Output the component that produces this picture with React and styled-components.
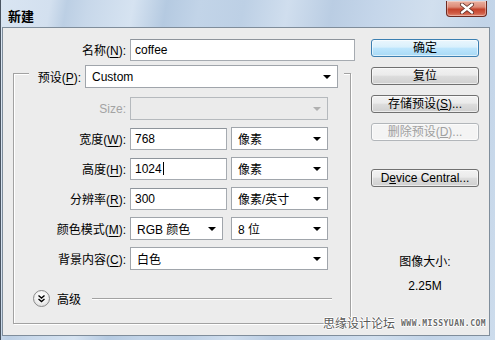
import React from 'react';
import styled, { createGlobalStyle } from 'styled-components';

const GlobalStyle = createGlobalStyle`
    html, body { margin: 0; padding: 0; background: #ececec; }
    body { font-family: "Liberation Sans", "Noto Sans CJK SC", sans-serif; font-size: 12px; }
`

const Window = styled.div`
    position: relative;
    width: 495px; height: 340px;
    box-sizing: border-box;
    display: flex; flex-direction: column;
    border-left: 1px solid #4a5562;
    background: linear-gradient(100deg,
        #d9e5f2 0%, #d3e0ef 9%, #bccfe4 12%, #c8d8ea 16%, #d6e3f1 24%,
        #b5cae1 30%, #c2d4e8 36%, #bdd0e5 44%, #d0deee 52%, #bacde3 60%,
        #c5d6ea 68%, #d1dfee 78%, #c2d4e8 88%, #cddcec 100%);
`
const TitleBar = styled.div`
    height: 27px;
    flex: none;
    display: flex; align-items: flex-start;
    padding: 0 8px 0 7px;
`
const Title = styled.div`
    font-family: "Noto Sans CJK SC", sans-serif;
    font-weight: bold;
    font-size: 13px;
    line-height: 13px;
    margin-top: 9px;
    color: #000;
`
const CloseButton = styled.div`
    margin-left: auto;
    margin-top: 1px;
    width: 41px; height: 16px;
    box-sizing: border-box;
    border: 1px solid #6e2a20;
    border-top: none;
    border-radius: 0 0 4px 4px;
    background: linear-gradient(#eab1a2 0%, #dd8a77 40%, #c4432c 55%, #cf5a43 80%, #e08a74 100%);
    box-shadow: inset 0 0 0 1px rgba(255,255,255,0.35);
    display: flex; align-items: center; justify-content: center;
`
const Client = styled.div`
    flex: 1;
    display: flex;
    margin: 0 5px 4px 1px;
    background: #ececec;
    border: 1px solid #7f8d9b;
`
const LeftPane = styled.div`
    padding: 10px 0 0 10px;
    width: 338px;
    flex: none;
`
const Row = styled.div`
    display: flex; align-items: center;
    gap: 4px;
    height: 23px;
    margin-top: ${p => p.$top || 0}px;
`
const Label = styled.div`
    width: ${p => p.$w}px;
    flex: none;
    text-align: right;
    white-space: nowrap;
    color: ${p => p.$disabled ? '#a3a3a3' : '#000'};
    & u { text-decoration: underline; text-underline-offset: 2px; }
`
const TextInput = styled.div`
    width: ${p => p.$w}px;
    height: 22px;
    box-sizing: border-box;
    flex: none;
    background: #fff;
    border: 1px solid #a6abb1;
    border-top-color: #8e949b;
    padding: 0 4px;
    display: flex; align-items: center;
    color: #000;
`
const Caret = styled.span`
    display: inline-block;
    width: 1px; height: 13px;
    background: #000;
    margin-left: 1px;
`
const Select = styled.div`
    width: ${p => p.$w}px;
    height: 23px;
    box-sizing: border-box;
    flex: none;
    background: ${p => p.$disabled ? '#ebebeb' : '#fff'};
    border: 1px solid ${p => p.$disabled ? '#b5b9bd' : '#a0a5ab'};
    padding: 0 6px 0 6px;
    display: flex; align-items: center; justify-content: space-between;
    color: #000;
`
const Arrow = styled.span`
    width: 0; height: 0;
    border-left: 4px solid transparent;
    border-right: 4px solid transparent;
    border-top: 4px solid ${p => p.$disabled ? '#b0b0b0' : '#000'};
    margin-top: 1px;
`
const Group = styled.div`
    margin-top: 12px;
    width: 338px; height: 251px;
    box-sizing: border-box;
    border: 1px solid #a2a2a2;
    box-shadow: inset 1px 1px 0 #fff, 1px 1px 0 #fff;
    padding-bottom: 16px;
`
const PresetRow = styled(Row)`
    width: 315px;
    box-sizing: border-box;
    margin: -9px 0 0 15px;
    padding: 0 6px;
    background: #ececec;
`
const Advanced = styled.div`
    display: flex; align-items: center;
    height: 17px;
    margin: 20px 18px 0 19px;
    gap: 7px;
`
const ExpandIcon = styled.div`
    width: 17px; height: 17px;
    box-sizing: border-box;
    border-radius: 50%;
    border: 1px solid #8a8a8a;
    background: radial-gradient(circle at 50% 35%, #ffffff 0%, #f1f1f1 50%, #d4d4d4 100%);
    display: flex; align-items: center; justify-content: center;
`
const Divider = styled.div`
    flex: 1;
    height: 1px;
    background: #a2a2a2;
    box-shadow: 0 1px 0 #fff;
    margin-left: 4px;
`
const RightPane = styled.div`
    margin-left: 20px;
    padding-top: 11px;
    width: 108px;
    display: flex; flex-direction: column; align-items: center;
`
const Button = styled.div`
    width: 108px; height: 18px;
    box-sizing: border-box;
    margin-top: ${p => p.$top ?? 10}px;
    border: 1px solid ${p => p.$primary ? '#3c7fb1' : p.$disabled ? '#b2b6ba' : '#707070'};
    border-radius: 3px;
    background: ${p => p.$primary
        ? 'linear-gradient(#eaf6fd 0%, #d9f0fc 45%, #bee6fd 50%, #a7d9f5 100%)'
        : p.$disabled ? '#f4f4f4'
        : 'linear-gradient(#f2f2f2 0%, #ebebeb 45%, #dddddd 50%, #cfcfcf 100%)'};
    box-shadow: inset 0 0 0 1px rgba(255,255,255,0.6);
    display: flex; align-items: center; justify-content: center;
    color: ${p => p.$disabled ? '#a0a0a0' : '#000'};
    line-height: 16px;
    white-space: nowrap;
`
const Info = styled.div`
    margin-top: ${p => p.$top}px;
    line-height: 14px;
    color: #000;
`
const Watermark = styled.div`
    position: absolute;
    left: 322px; top: 316px;
    display: flex; align-items: center; gap: 6px;
    color: #5a5a5a;
    text-shadow: 1px 0 0 #fff, -1px 0 0 #fff, 0 1px 0 #fff, 0 -1px 0 #fff;
`
const WmCn = styled.span`
    font-family: "Noto Sans CJK SC", sans-serif;
    font-size: 12px;
    line-height: 14px;
`
const WmUrl = styled.span`
    font-family: "DejaVu Sans Mono", monospace;
    font-weight: bold;
    font-size: 8px;
    letter-spacing: 0.5px;
    color: #6a6a6a;
`

const Key = ({ label, k, after = ':' }) => <>{label}(<u>{k}</u>){after}</>;

const App = () => {
    return <Window>
        <GlobalStyle />
        <TitleBar>
            <Title>新建</Title>
            <CloseButton>
                <svg width="16" height="11" viewBox="0 0 16 11">
                    <path d="M3 1.5 L13 9.5 M13 1.5 L3 9.5" stroke="#5a2a22" strokeWidth="4" strokeLinecap="round" />
                    <path d="M3 1.5 L13 9.5 M13 1.5 L3 9.5" stroke="#fff" strokeWidth="2.4" strokeLinecap="round" />
                </svg>
            </CloseButton>
        </TitleBar>
        <Client>
            <LeftPane>
                <Row>
                    <Label $w={113}><Key label="名称" k="N" /></Label>
                    <TextInput $w={225}>coffee</TextInput>
                </Row>
                <Group>
                    <PresetRow>
                        <Label $w={46}><Key label="预设" k="P" /></Label>
                        <Select $w={253}>Custom<Arrow /></Select>
                    </PresetRow>
                    <Row $top={9}>
                        <Label $w={112} $disabled>Size:</Label>
                        <Select $w={198} $disabled><span /><Arrow $disabled /></Select>
                    </Row>
                    <Row $top={7}>
                        <Label $w={112}><Key label="宽度" k="W" /></Label>
                        <TextInput $w={97}>768</TextInput>
                        <Select $w={97}>像素<Arrow /></Select>
                    </Row>
                    <Row $top={7}>
                        <Label $w={112}><Key label="高度" k="H" /></Label>
                        <TextInput $w={97}>1024<Caret /></TextInput>
                        <Select $w={97}>像素<Arrow /></Select>
                    </Row>
                    <Row $top={7}>
                        <Label $w={112}><Key label="分辨率" k="R" /></Label>
                        <TextInput $w={97}>300</TextInput>
                        <Select $w={97}>像素/英寸<Arrow /></Select>
                    </Row>
                    <Row $top={7}>
                        <Label $w={112}><Key label="颜色模式" k="M" /></Label>
                        <Select $w={93}>RGB 颜色<Arrow /></Select>
                        <Select $w={97} style={{ marginLeft: 4 }}>8 位<Arrow /></Select>
                    </Row>
                    <Row $top={7}>
                        <Label $w={112}><Key label="背景内容" k="C" /></Label>
                        <Select $w={198}>白色<Arrow /></Select>
                    </Row>
                    <Advanced>
                        <ExpandIcon>
                            <svg width="9" height="9" viewBox="0 0 9 9">
                                <path d="M1.5 1.5 L4.5 4 L7.5 1.5 M1.5 5 L4.5 7.5 L7.5 5" fill="none" stroke="#000" strokeWidth="1.4" />
                            </svg>
                        </ExpandIcon>
                        <span>高级</span>
                        <Divider />
                    </Advanced>
                </Group>
            </LeftPane>
            <RightPane>
                <Button $primary $top={0}>确定</Button>
                <Button>复位</Button>
                <Button>存储预设(<u>S</u>)...</Button>
                <Button $disabled>删除预设(<u>D</u>)...</Button>
                <Button $top={28}>D<u>e</u>vice Central...</Button>
                <Info $top={68}>图像大小:</Info>
                <Info $top={10}>2.25M</Info>
            </RightPane>
        </Client>
        <Watermark>
            <WmCn>思缘设计论坛</WmCn>
            <WmUrl>WWW.MISSYUAN.COM</WmUrl>
        </Watermark>
    </Window>;
};

export default App;
